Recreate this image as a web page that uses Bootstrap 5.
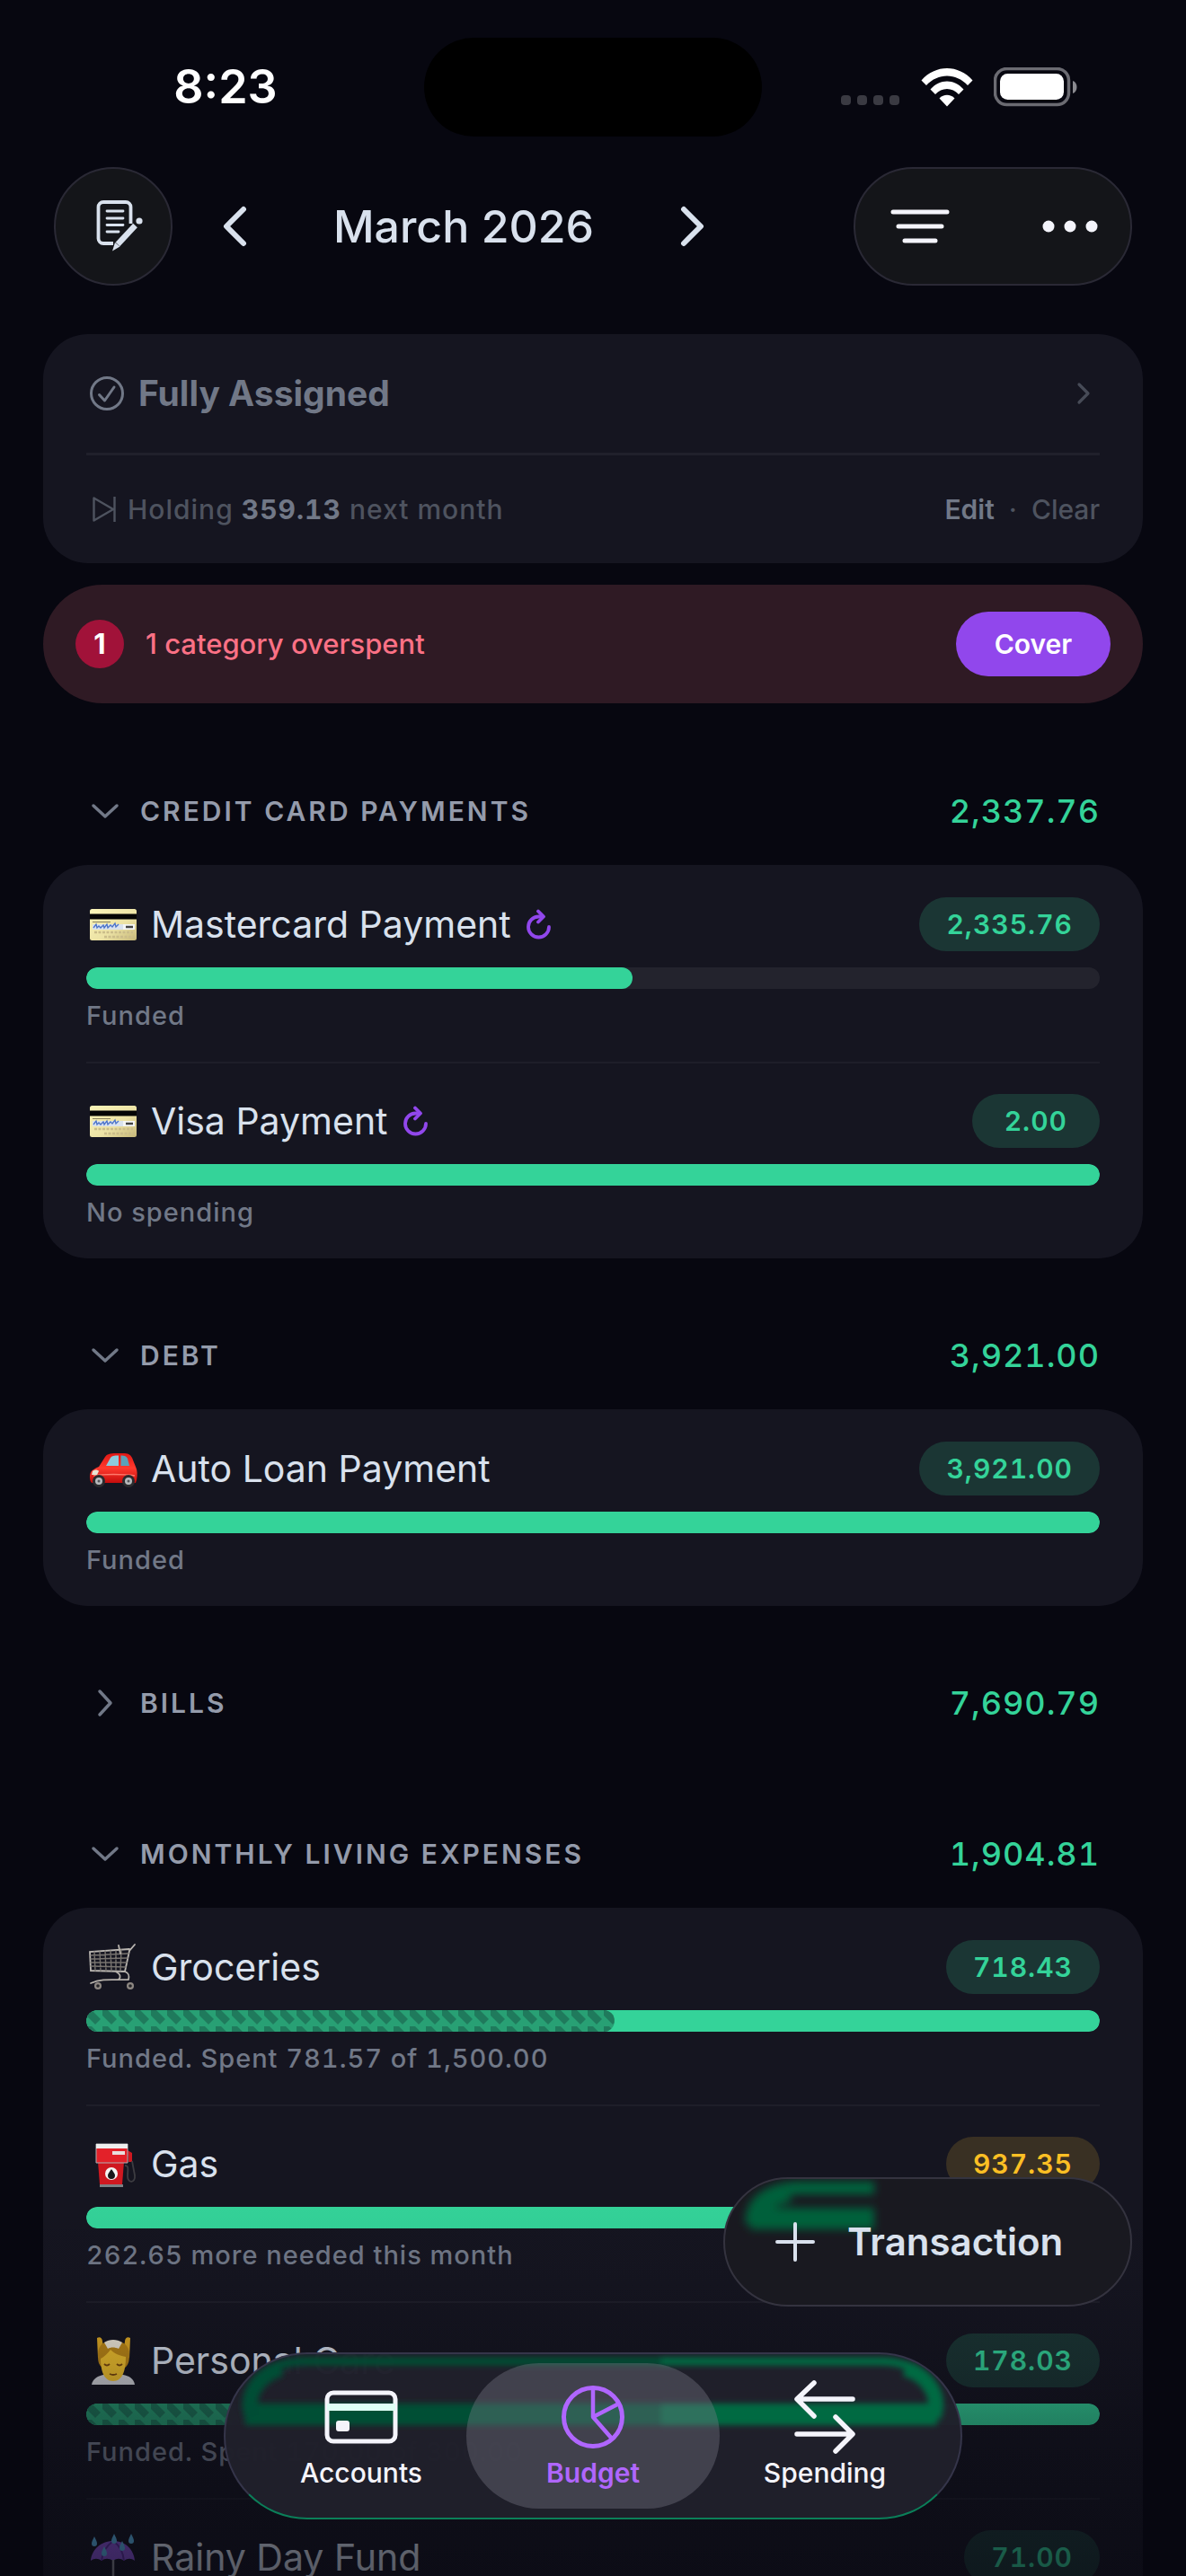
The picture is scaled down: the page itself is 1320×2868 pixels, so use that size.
<!DOCTYPE html>
<html lang="en" data-bs-theme="dark">
<head>
<meta charset="utf-8">
<meta name="viewport" content="width=device-width, initial-scale=1">
<title>Budget – March 2026</title>
<link href="https://cdn.jsdelivr.net/npm/bootstrap@5.3.0/dist/css/bootstrap.min.css" rel="stylesheet">
<style>
  :root { --ink:#d9e1ed; --muted:#717887; --dim:#4e535f; --panel:#151520; --page:#070710; --mint:#34d399; --violet:#9147ec; }
  body { background:var(--page); color:var(--ink); font-family:Inter,"Liberation Sans",sans-serif; font-size:42px; line-height:48px; }
  svg { display:block; flex:none; }
  button { font-family:inherit; }
  .plain-btn { background:none; border:0; padding:0; color:inherit; }
  .status-bar { display:grid; grid-template-columns:1fr 376px 1fr; padding:42px 0 0; height:186px; }
  .status-bar > * { height:110px; }
  .clock { font-size:52px; font-weight:600; color:#fff; padding-left:30px; }
  .island { background:#000; border-radius:55px; }
  .signals { padding-right:120px; gap:22px; }
  .top-nav { padding:0 60px; height:132px; }
  .glass { background:#141519; border:2px solid #2a2935; border-radius:66px; color:var(--ink); height:132px; }
  .round-btn { width:132px; }
  .round-btn svg { margin-left:16px; }
  .month-picker { margin-left:36px; }
  .month-picker button { width:66px; height:66px; }
  .month-title { width:444px; font-size:50px; line-height:60px; font-weight:500; margin:0; color:var(--ink); }
  .tool-pill { width:310px; }
  .tool-pill button { height:100%; width:144px; color:#f4f4fb; }
  .tool-pill button + button { width:134px; }
  .budget-list { padding:54px 48px 0; scrollbar-width:none; }
  .panel { background:var(--panel); border-radius:50px; padding:0 48px; }
  .assigned { height:132px; gap:15px; padding:0 10px 0 3px; font-size:39px; font-weight:700; color:var(--muted); }
  .holding { border-top:3px solid #20202b; font-size:30px; color:var(--dim); height:123px; font-weight:500; }
  .holding > span { letter-spacing:1px; font-variant-numeric:tabular-nums; }
  .holding b { color:var(--muted); font-weight:700; }
  .holding button.strong { color:var(--muted); font-weight:600; }
  .holding button { font-weight:500; }
  .overspent { background:#2f1a24; border-radius:66px; height:132px; margin-top:24px; padding:0 36px; font-size:31px; font-weight:500; color:#fb7185; gap:24px; }
  .count-dot { width:54px; height:54px; background:#a11239; color:#fff; font-weight:700; }
  .cover-btn { --bs-btn-bg:var(--violet); --bs-btn-color:#fff; --bs-btn-border-width:0; --bs-btn-hover-bg:#7e34dc; --bs-btn-hover-color:#fff; width:172px; height:72px; border-radius:36px; font-size:30px; font-weight:600; padding:0; }
  .group-head { height:120px; margin-top:48px; padding:0 48px 0 53px; }
  .group-head.first { margin-top:60px; }
  .group-head h2 { font-size:30px; line-height:36px; font-weight:600; letter-spacing:3px; color:#949bab; margin:0; }
  .group-head button { gap:23px; color:var(--muted); }
  .group-total { font-size:36px; font-weight:500; color:var(--mint); letter-spacing:1px; font-variant-numeric:tabular-nums; }
  .cat { height:219px; padding-top:36px; }
  .cat + .cat { border-top:2px solid #1e1e29; padding-top:34px; }
  .cat-line { height:60px; }
  .cat-icon { width:60px; height:60px; margin-right:12px; }
  .cat h3 { font-size:41px; line-height:48px; font-weight:400; margin:0; color:var(--ink); }
  .money { height:60px; border-radius:30px; padding:0 30px; font-size:30px; line-height:60px; font-weight:600; letter-spacing:1px; font-variant-numeric:tabular-nums; background:#1b3634; color:var(--mint); }
  .money.short { padding:0 36px; }
  .money.warn { background:#393023; color:#fbbf24; }
  .meter { --bs-progress-height:24px; --bs-progress-bg:#23232d; --bs-progress-border-radius:12px; --bs-progress-bar-bg:var(--mint); margin-top:18px; position:relative; }
  .meter .progress-bar { border-radius:12px; }
  .meter .spent { position:absolute; left:0; top:0; height:24px; background:#28a074; }
  .note { font-size:29px; line-height:36px; color:var(--muted); margin:12px 0 0; font-weight:500; letter-spacing:1px; font-variant-numeric:tabular-nums; }
  .fade-out { height:430px; pointer-events:none; background:linear-gradient(to bottom,rgba(7,7,16,0) 0,rgba(7,7,16,.05) 22%,rgba(7,7,16,.24) 45%,rgba(7,7,16,.4) 60%,rgba(7,7,16,.62) 100%); }
  .add-btn { right:60px; bottom:300px; width:455px; height:144px; border-radius:72px; background:#191920; border:2px solid #34333f; color:var(--ink); font-size:42px; font-weight:600; gap:36px; padding:0 80px 0 56px; overflow:hidden; }
  .glow { position:absolute; inset:0; width:100%; height:100%; }
  .add-btn > :not(.glow), .tab-bar > :not(.glow) { position:relative; }
  .tab-wrap { bottom:63px; pointer-events:none; }
  .tab-bar { pointer-events:auto; position:relative; width:822px; height:186px; border-radius:93px; background:rgba(32,32,43,.98); border:2px solid #35354a; border-bottom-color:#0b7f59; padding:10px 22px; overflow:hidden; }
  .tab-bar a { flex:1 1 0; height:162px; border-radius:81px; color:#f4f4fb; font-size:30px; line-height:36px; font-weight:500; text-decoration:none; padding-top:18px; }
  .tab-bar a.active { background:rgba(128,128,140,.36); color:#b066ff; font-weight:600; margin:0 -12px; flex-grow:1; flex-basis:24px; }
  .tab-bar svg.tab-ico { width:84px; height:84px; }
  .tab-bar a span { margin-top:2px; }
</style>
</head>
<body>
<svg width="0" height="0" class="position-absolute" aria-hidden="true">
  <defs>
    <pattern id="weave" width="18" height="18" patternUnits="userSpaceOnUse"><path d="M0 0H6L16 10L10 16L0 6Z" fill="#1f7a5c"/></pattern>
    <linearGradient id="gold" x1="0" x2="1" y2="1"><stop offset="0" stop-color="#fbf5b9"/><stop offset=".6" stop-color="#ece2a4"/><stop offset="1" stop-color="#c6b778"/></linearGradient>
    <linearGradient id="redpaint" y2="1" x2="0"><stop offset="0" stop-color="#e01715"/><stop offset=".5" stop-color="#ff3a2e"/><stop offset="1" stop-color="#c40c0c"/></linearGradient>
    <filter id="soft" filterUnits="userSpaceOnUse" x="-20" y="-20" width="500" height="200"><feGaussianBlur stdDeviation="5"/></filter>
    <filter id="soft2" filterUnits="userSpaceOnUse" x="-20" y="-20" width="860" height="220"><feGaussianBlur stdDeviation="3"/></filter>
    <symbol id="i-card" viewBox="0 0 60 60"><rect x="4" y="13" width="52" height="35" rx="2.500" fill="url(#gold)"/><path d="M4 18.500h52v6H4z" fill="#050505"/><path d="M7 30h34v6H7z" fill="#d9e2ee"/><path d="M41 30h13v6H41z" fill="#f4f6f6"/><path d="M44 33h8" stroke="#444" stroke-width="2.500"/><path d="M8 34l3-4 1 4 2-2 2 2 3-3 1 3 3-4 1 4 3-3 2 2 3-4 1 4 3-3" fill="none" stroke="#4c74c9" stroke-width="1.300"/><path d="M9 39h43M20 44h33" stroke="#cbbd8a" stroke-width="2.500" stroke-dasharray="3 1.500"/><path d="M7 27.500h20" stroke="#8c8460"/></symbol>
    <symbol id="i-car" viewBox="0 0 60 60"><path d="M14 28l7-11c2-3 5-4 12-4h8c5 0 8 1 10 5l4 10c2 4 2 9 1 15l-1 3H7c-3 0-4-8-2-12 2-3 5-4 9-6z" fill="url(#redpaint)"/><path d="M22 27l5-9c1-2 4-2.500 9-2.500V27z" fill="#8ecbdd"/><path d="M38.500 15.500c4 0 6 .5 7.500 3.500l2 8h-9.500z" fill="#5ca2ba"/><path d="M8 38c10-2 34-2 46 0" stroke="#ff7a6c" stroke-width="1.500" fill="none"/><path d="M7 33c2-2 6-2 7 0l-2 4H6z" fill="#e9e3d4"/><g fill="#2b2b2e"><circle cx="14" cy="44" r="7"/><circle cx="47" cy="44" r="7"/></g><g fill="#b7babd"><circle cx="14" cy="44" r="4"/><circle cx="47" cy="44" r="4"/></g><g fill="#54575b"><circle cx="14" cy="44" r="1.500"/><circle cx="47" cy="44" r="1.500"/></g></symbol>
    <symbol id="i-cart" viewBox="0 0 60 60"><g fill="none" stroke="#a29f9b" stroke-width="1.400" stroke-linecap="round"><path d="M54 5l-6 7-5 23-38-1-1-21 44-3" stroke="#bab6b1" stroke-width="1.800"/><path d="M5 17l42-2M5 21l41-1M5 25h40M5 29l39 1M9 13l1 21M15 13l1 21M21 12l1 22M27 12l1 22M33 12v22M39 11l-1 23" stroke="#77736f"/><path d="M36 6l2 9M33 35c5 3 6 6 3 9M43 35c5 2 5 5 4 9M5 48c14-6 26-3 42-4" stroke="#b5b0aa" stroke-width="1.800"/></g><g fill="#8d8782"><circle cx="13" cy="51" r="4"/><circle cx="49" cy="51" r="4"/></g><g fill="#242327"><circle cx="13" cy="51" r="1.800"/><circle cx="49" cy="51" r="1.800"/></g></symbol>
    <symbol id="i-gas" viewBox="0 0 60 60"><path d="M46 15l5 3v10h-4z" fill="#cd1820"/><path d="M43 32c5 0 3 5 3 12 0 8 9 8 8-1l-3-16" fill="none" stroke="#3d3c41" stroke-width="1.800"/><path d="M13 28h29l-2 25H15z" fill="#cf1820"/><path d="M11 8h35v21H11z" fill="#e32129" stroke="#aeb0b3"/><path d="M11 8h35v5H11z" fill="#eee"/><path d="M29 16h14v4H29z" fill="#e8dedd"/><circle cx="28" cy="41" r="7" fill="#f5f5f3"/><path d="M28 36c2 3 4 5 4 7a4 4 0 0 1-8 0c0-2 2-4 4-7z" fill="#18181a"/><path d="M15 53h26v3H15z" fill="#7b8084"/></symbol>
    <symbol id="i-spa" viewBox="0 0 60 60"><path d="M6 57c1-7 8-10 13-11h22c6 1 12 4 13 11z" fill="#d5d7dc"/><path d="M12 5c3-2 6 0 6 4l1 5c7-6 16-6 23 0l1-5c0-4 3-6 6-4l-1 22H13z" fill="#e6ae22"/><path d="M13 24c0-12 7-16 17-16s18 4 18 16c0 8-2 12-5 14H18c-4-3-5-6-5-14z" fill="#c08a16"/><path d="M16 28c4-2 8-6 11-10 5 5 11 7 17 8 0 14-3 27-14 27S16 40 16 28z" fill="#f6c52d"/><path d="M20 10c6-4 14-4 20 0l-4 7c-4-2-9-2-12 0z" fill="#f6f0de"/><path d="M20 34q3 3 6 0M34 34q3 3 6 0M26 45q4 2 8 0" stroke="#7c4a0c" stroke-width="1.800" fill="none"/></symbol>
    <symbol id="i-rain" viewBox="0 0 60 60"><path d="M30 12C16 12 6 22 5 34c4-3 8-3 12 0 4-3 8-3 13 0 4-3 8-3 12 0 4-3 8-3 12 0C53 22 44 12 30 12z" fill="#8a55d6"/><path d="M30 12c-7 5-12 12-13 22M30 12c7 5 11 12 12 22" stroke="#5c319e" stroke-width="2" fill="none"/><path d="M30 33v20c0 5-8 5-8 0" stroke="#8a8c92" stroke-width="2.500" fill="none"/><path d="M9 7c2 4 3 6 3 8a3 3 0 0 1-6 0c0-2 1-4 3-8zM31 4c2 4 3 6 3 8a3 3 0 0 1-6 0c0-2 1-4 3-8zM50 4c2 4 3 6 3 8a3 3 0 0 1-6 0c0-2 1-4 3-8zM20 18c2 4 3 6 3 8a3 3 0 0 1-6 0c0-2 1-4 3-8zM40 12c2 4 3 6 3 8a3 3 0 0 1-6 0c0-2 1-4 3-8z" fill="#5bb4e4"/></symbol>
    <symbol id="i-down" viewBox="0 0 32 32"><path d="M3 10L16 22L29 10" fill="none" stroke="currentColor" stroke-width="3.500" stroke-linecap="round" stroke-linejoin="round"/></symbol>
    <symbol id="i-right" viewBox="0 0 32 32"><path d="M10 3L22 16L10 29" fill="none" stroke="currentColor" stroke-width="3.500" stroke-linecap="round" stroke-linejoin="round"/></symbol>
    <symbol id="i-redo" viewBox="0 0 30 34"><path d="M26 20A11.500 11.500 0 1 1 14.500 8.500h4" fill="none" stroke="#9147ec" stroke-width="3.800" stroke-linecap="round"/><path d="M14 2.500L20 8.500L14 14.500" fill="none" stroke="#9147ec" stroke-width="3.800" stroke-linecap="round" stroke-linejoin="round"/></symbol>
  </defs>
</svg>

<div class="vh-100 d-flex flex-column overflow-hidden position-relative">
  <div class="status-bar flex-shrink-0">
    <div class="clock d-flex align-items-center justify-content-center">8:23</div>
    <div class="island"></div>
    <div class="signals d-flex align-items-center justify-content-end">
      <svg width="66" height="44" viewBox="0 0 66 44" fill="#3a3a42"><rect y="31" width="11" height="11" rx="4"/><rect x="18" y="31" width="11" height="11" rx="4"/><rect x="36" y="31" width="11" height="11" rx="4"/><rect x="54" y="31" width="11" height="11" rx="4"/></svg>
      <svg width="60" height="44" viewBox="0 0 60 44" fill="#fff"><path d="M1.500 14.500C17 -3.500 43 -3.500 58.500 14.500L53 20C40 6 20 6 7 20Z"/><path d="M11.500 24.500C22 12.500 38 12.500 48.500 24.500L43 30C36 22 24 22 17 30Z"/><path d="M21.500 34.500C26 29.500 34 29.500 38.500 34.500L30 43.500Z"/></svg>
      <svg width="94" height="44" viewBox="0 0 94 44"><rect x="1.500" y="1.500" width="82" height="40" rx="13" fill="none" stroke="#6b6b72" stroke-width="3.500"/><rect x="7" y="7" width="71" height="29" rx="8.500" fill="#fff"/><path d="M88 15c6 2 6 12 0 14z" fill="#8a8a90"/></svg>
    </div>
  </div>

  <header class="top-nav d-flex align-items-center flex-shrink-0">
    <button class="glass round-btn d-flex align-items-center justify-content-center p-0" type="button" aria-label="Notes">
      <svg width="54" height="60" viewBox="0 0 54 60" fill="none" stroke="currentColor" stroke-linecap="round"><path d="M38.500 27V8.500a5.500 5.500 0 0 0-5.500-5.500H8a5.500 5.500 0 0 0-5.500 5.500v35a5.500 5.500 0 0 0 5.500 5.500h11" stroke-width="3.800" stroke-linecap="butt"/><path d="M12 13h18M12 21h18M12 28.500h18M12 36h13" stroke-width="2.800"/><path d="M43.500 29L24 50" stroke-width="6.500" stroke-linecap="butt"/><path d="M21 48L26.500 52.500L18 57.500Z" fill="currentColor" stroke="none"/><circle cx="48" cy="24" r="3.600" fill="currentColor" stroke="none"/></svg>
    </button>
    <div class="month-picker d-flex align-items-center">
      <button class="plain-btn d-flex align-items-center justify-content-center" type="button" aria-label="Previous month"><svg width="28" height="48" viewBox="0 0 28 48"><path d="M24 5L5 24L24 43" fill="none" stroke="currentColor" stroke-width="6" stroke-linecap="round" stroke-linejoin="round"/></svg></button>
      <h1 class="month-title text-center">March 2026</h1>
      <button class="plain-btn d-flex align-items-center justify-content-center" type="button" aria-label="Next month"><svg width="28" height="48" viewBox="0 0 28 48"><path d="M4 5L23 24L4 43" fill="none" stroke="currentColor" stroke-width="6" stroke-linecap="round" stroke-linejoin="round"/></svg></button>
    </div>
    <div class="glass tool-pill d-flex justify-content-between ms-auto">
      <button class="plain-btn d-flex align-items-center justify-content-center" type="button" aria-label="Filter"><svg width="68" height="44" viewBox="0 0 68 44" stroke="currentColor" stroke-width="5" stroke-linecap="round"><path d="M4 6h60M10 22h48M17 38h34"/></svg></button>
      <button class="plain-btn d-flex align-items-center justify-content-center" type="button" aria-label="More"><svg width="62" height="14" viewBox="0 0 62 14" fill="currentColor"><circle cx="7" cy="7" r="6.500"/><circle cx="31" cy="7" r="6.500"/><circle cx="55" cy="7" r="6.500"/></svg></button>
    </div>
  </header>

  <main class="budget-list flex-grow-1 overflow-auto">
    <section class="panel">
      <div class="assigned d-flex align-items-center">
        <svg width="40" height="40" viewBox="0 0 40 40" fill="none" stroke="currentColor" stroke-width="3" stroke-linecap="round" stroke-linejoin="round"><circle cx="20" cy="20" r="17.500"/><path d="M11.500 21.500l6 6.500L28 13"/></svg>
        <span>Fully Assigned</span>
        <svg class="ms-auto" width="16" height="26" viewBox="0 0 16 26" fill="none" stroke="#474b57" stroke-width="3.200" stroke-linecap="round" stroke-linejoin="round"><path d="M3 3l10 10L3 23"/></svg>
      </div>
      <div class="holding d-flex align-items-center">
        <svg class="ms-1 me-2" width="34" height="32" viewBox="0 0 34 32" fill="none" stroke="currentColor" stroke-width="2.400" stroke-linejoin="round"><path d="M4.500 3.500v25L26 16ZM27.500 2v28"/></svg>
        <span>Holding <b>359.13</b> next month</span>
        <div class="ms-auto d-flex gap-3"><button class="plain-btn strong" type="button">Edit</button><span>·</span><button class="plain-btn" type="button">Clear</button></div>
      </div>
    </section>

    <section class="overspent d-flex align-items-center">
      <span class="count-dot rounded-circle d-flex align-items-center justify-content-center">1</span>
      <span>1 category overspent</span>
      <button class="btn cover-btn ms-auto" type="button">Cover</button>
    </section>

    <section>
      <div class="group-head first d-flex align-items-center justify-content-between">
        <button class="plain-btn d-flex align-items-center" type="button" aria-expanded="true"><svg width="32" height="32"><use href="#i-down"/></svg><h2>CREDIT CARD PAYMENTS</h2></button>
        <span class="group-total">2,337.76</span>
      </div>
      <div class="panel">
        <article class="cat">
          <div class="cat-line d-flex align-items-center"><svg class="cat-icon"><use href="#i-card"/></svg><h3>Mastercard Payment</h3><svg class="ms-3" width="30" height="34"><use href="#i-redo"/></svg><span class="money ms-auto">2,335.76</span></div>
          <div class="progress meter"><div class="progress-bar" style="width:53.9%"></div></div>
          <p class="note">Funded</p>
        </article>
        <article class="cat">
          <div class="cat-line d-flex align-items-center"><svg class="cat-icon"><use href="#i-card"/></svg><h3>Visa Payment</h3><svg class="ms-3" width="30" height="34"><use href="#i-redo"/></svg><span class="money short ms-auto">2.00</span></div>
          <div class="progress meter"><div class="progress-bar" style="width:100%"></div></div>
          <p class="note">No spending</p>
        </article>
      </div>
    </section>

    <section>
      <div class="group-head d-flex align-items-center justify-content-between">
        <button class="plain-btn d-flex align-items-center" type="button" aria-expanded="true"><svg width="32" height="32"><use href="#i-down"/></svg><h2>DEBT</h2></button>
        <span class="group-total">3,921.00</span>
      </div>
      <div class="panel">
        <article class="cat">
          <div class="cat-line d-flex align-items-center"><svg class="cat-icon"><use href="#i-car"/></svg><h3>Auto Loan Payment</h3><span class="money ms-auto">3,921.00</span></div>
          <div class="progress meter"><div class="progress-bar" style="width:100%"></div></div>
          <p class="note">Funded</p>
        </article>
      </div>
    </section>

    <section>
      <div class="group-head d-flex align-items-center justify-content-between">
        <button class="plain-btn d-flex align-items-center" type="button" aria-expanded="false"><svg width="32" height="32"><use href="#i-right"/></svg><h2>BILLS</h2></button>
        <span class="group-total">7,690.79</span>
      </div>
    </section>

    <section>
      <div class="group-head d-flex align-items-center justify-content-between">
        <button class="plain-btn d-flex align-items-center" type="button" aria-expanded="true"><svg width="32" height="32"><use href="#i-down"/></svg><h2>MONTHLY LIVING EXPENSES</h2></button>
        <span class="group-total">1,904.81</span>
      </div>
      <div class="panel">
        <article class="cat">
          <div class="cat-line d-flex align-items-center"><svg class="cat-icon"><use href="#i-cart"/></svg><h3>Groceries</h3><span class="money ms-auto">718.43</span></div>
          <div class="progress meter"><div class="progress-bar" style="width:100%"></div><div class="progress-bar spent" style="width:52.1%"><svg width="100%" height="24"><rect width="100%" height="24" fill="url(#weave)"/></svg></div></div>
          <p class="note">Funded. Spent 781.57 of 1,500.00</p>
        </article>
        <article class="cat">
          <div class="cat-line d-flex align-items-center"><svg class="cat-icon"><use href="#i-gas"/></svg><h3>Gas</h3><span class="money warn ms-auto">937.35</span></div>
          <div class="progress meter"><div class="progress-bar" style="width:78.1%"></div></div>
          <p class="note">262.65 more needed this month</p>
        </article>
        <article class="cat">
          <div class="cat-line d-flex align-items-center"><svg class="cat-icon"><use href="#i-spa"/></svg><h3>Personal Care</h3><span class="money ms-auto">178.03</span></div>
          <div class="progress meter"><div class="progress-bar" style="width:100%"></div><div class="progress-bar spent" style="width:56.7%"><svg width="100%" height="24"><rect width="100%" height="24" fill="url(#weave)"/></svg></div></div>
          <p class="note">Funded. Spent 170.00 of 300.00</p>
        </article>
        <article class="cat">
          <div class="cat-line d-flex align-items-center"><svg class="cat-icon"><use href="#i-rain"/></svg><h3>Rainy Day Fund</h3><span class="money ms-auto">71.00</span></div>
          <div class="progress meter"><div class="progress-bar" style="width:100%"></div></div>
        </article>
      </div>
    </section>
  </main>

  <div class="fade-out position-absolute bottom-0 start-0 end-0"></div>

  <button class="add-btn position-absolute d-flex align-items-center" type="button">
    <svg class="glow" viewBox="0 0 451 140" preserveAspectRatio="none" fill="none"><g filter="url(#soft)"><path d="M166 10H80C50 11 32 24 30 43H166" stroke="#00643c" stroke-width="14"/><path d="M28 44H166" stroke="#00603a" stroke-width="24"/><path d="M34 42Q38 22 72 16" stroke="#00603a" stroke-width="20"/></g></svg>
    <svg width="44" height="44" viewBox="0 0 44 44" stroke="currentColor" stroke-width="4" stroke-linecap="round"><path d="M22 2v40M2 22h40"/></svg>
    <span>Transaction</span>
  </button>

  <div class="tab-wrap position-absolute start-0 end-0 d-flex justify-content-center">
    <nav class="tab-bar d-flex">
      <svg class="glow" viewBox="0 0 818 182" preserveAspectRatio="none" fill="none">
        <g filter="url(#soft2)"><path d="M490 8H90C50 8 28 28 26 60C26 66 32 67 44 67H490" stroke="#004e34" stroke-width="9"/><path d="M22 67H490" stroke="#005036" stroke-width="24"/><path d="M485 8H728C770 8 792 30 792 60" stroke="#006a43" stroke-width="9"/><path d="M485 67H792" stroke="#006a43" stroke-width="24"/><path d="M30 70C20 44 40 22 62 16" stroke="#004e34" stroke-width="17"/><path d="M788 70C798 44 778 22 756 16" stroke="#006a43" stroke-width="17"/></g>
      </svg>
      <a href="#accounts" class="d-flex flex-column align-items-center"><svg class="tab-ico" viewBox="0 0 84 84" fill="none" stroke="currentColor" stroke-width="5"><rect x="4" y="15" width="76" height="54" rx="7"/><path d="M4 31h76" stroke-width="8" stroke="#dffff5"/><rect x="14" y="46" width="15" height="12" rx="3" fill="currentColor" stroke="none"/></svg><span>Accounts</span></a>
      <a href="#budget" class="active d-flex flex-column align-items-center" aria-current="page"><svg class="tab-ico" viewBox="0 0 84 84" fill="none" stroke="currentColor" stroke-width="5" stroke-linejoin="round"><circle cx="42" cy="42" r="32.500"/><path d="M42 10V42L69 28M42 42L63 66" stroke-width="4.500"/></svg><span>Budget</span></a>
      <a href="#spending" class="d-flex flex-column align-items-center"><svg class="tab-ico" viewBox="0 0 84 84" fill="none" stroke="currentColor" stroke-width="5.500" stroke-linecap="round" stroke-linejoin="round"><path d="M73 22H12M30 4L11 22L30 41M11 61H72M54 42L73 61L54 80"/></svg><span>Spending</span></a>
    </nav>
  </div>
</div>
<script src="https://cdn.jsdelivr.net/npm/bootstrap@5.3.0/dist/js/bootstrap.bundle.min.js"></script>
</body>
</html>
